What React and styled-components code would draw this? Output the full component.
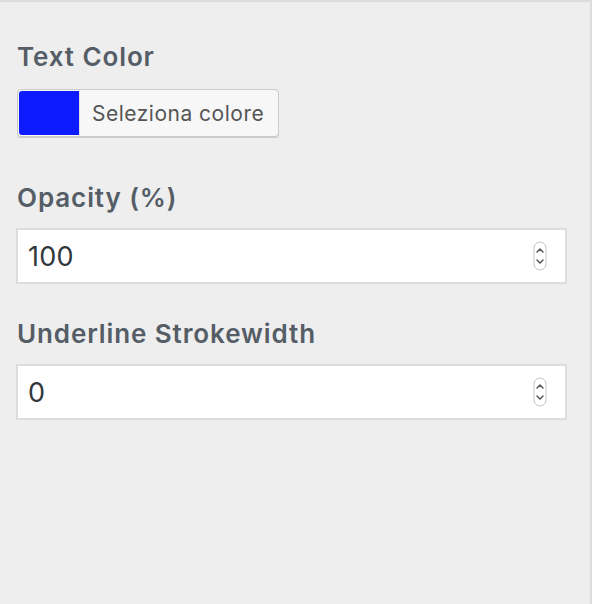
import React from "react";
import styled, { createGlobalStyle } from "styled-components";

const Global = createGlobalStyle`
  html, body { margin: 0; padding: 0; background: #eeeeee; }
  body { font-family: Inter, "Noto Sans", sans-serif; }
  * { box-sizing: border-box; }
`;

const Panel = styled.div`
  width: 592px;
  height: 604px;
  border-top: 2px solid #dcdcdc;
  border-right: 2px solid #dcdcdc;
  padding: 41px 0 0 16px;
  display: flex;
  flex-direction: column;
`;

const Field = styled.div`
  display: flex;
  flex-direction: column;
  margin-bottom: ${(p) => p.$gap}px;
`;

const Label = styled.label`
  font-size: 26px;
  line-height: 28px;
  font-weight: 600;
  letter-spacing: 0.9px;
  color: #555d66;
  padding-left: 1px;
  margin-bottom: ${(p) => p.$gap}px;
`;

const ColorButton = styled.button`
  display: flex;
  align-items: stretch;
  width: 262px;
  height: 48px;
  margin-left: 1px;
  padding: 1px;
  border: 1px solid #cccccc;
  border-radius: 4px;
  background: #f7f7f7;
  box-shadow: 0 1px 0 #cccccc;
  cursor: pointer;
  font-family: inherit;
`;

const Swatch = styled.span`
  width: 60px;
  background: ${(p) => p.$color};
  border-radius: 3px 0 0 3px;
`;

const ButtonText = styled.span`
  flex: 1;
  display: flex;
  align-items: center;
  padding-left: 12px;
  border-left: 1px solid #dddddd;
  font-size: 21px;
  letter-spacing: 0.5px;
  color: #555555;
`;

const NumberBox = styled.div`
  width: 551px;
  height: 56px;
  border: 2px solid #dddddd;
  background: #ffffff;
  display: flex;
  align-items: center;
  padding: 0 18px 0 10px;
`;

const NumberText = styled.span`
  flex: 1;
  font-size: 27px;
  letter-spacing: 0.3px;
  color: #32373c;
`;

const Spinner = () => (
  <svg width="14" height="30" viewBox="0 0 14 30">
    <rect x="1" y="1" width="12" height="28" rx="6" fill="#fff" stroke="#c4c4c4" strokeWidth="1" />
    <path d="M4 11 L7 8 L10 11" fill="none" stroke="#555" strokeWidth="1.5" strokeLinecap="round" strokeLinejoin="round" />
    <path d="M4 19 L7 22 L10 19" fill="none" stroke="#555" strokeWidth="1.5" strokeLinecap="round" strokeLinejoin="round" />
  </svg>
);

export default function App() {
  return (
    <>
      <Global />
      <Panel>
        <Field $gap={47}>
          <Label $gap={18}>Text Color</Label>
          <ColorButton>
            <Swatch $color="#0c1bff" />
            <ButtonText>Seleziona colore</ButtonText>
          </ColorButton>
        </Field>
        <Field $gap={36}>
          <Label $gap={16}>Opacity (%)</Label>
          <NumberBox>
            <NumberText>100</NumberText>
            <Spinner />
          </NumberBox>
        </Field>
        <Field $gap={0}>
          <Label $gap={16}>Underline Strokewidth</Label>
          <NumberBox>
            <NumberText>0</NumberText>
            <Spinner />
          </NumberBox>
        </Field>
      </Panel>
    </>
  );
}
